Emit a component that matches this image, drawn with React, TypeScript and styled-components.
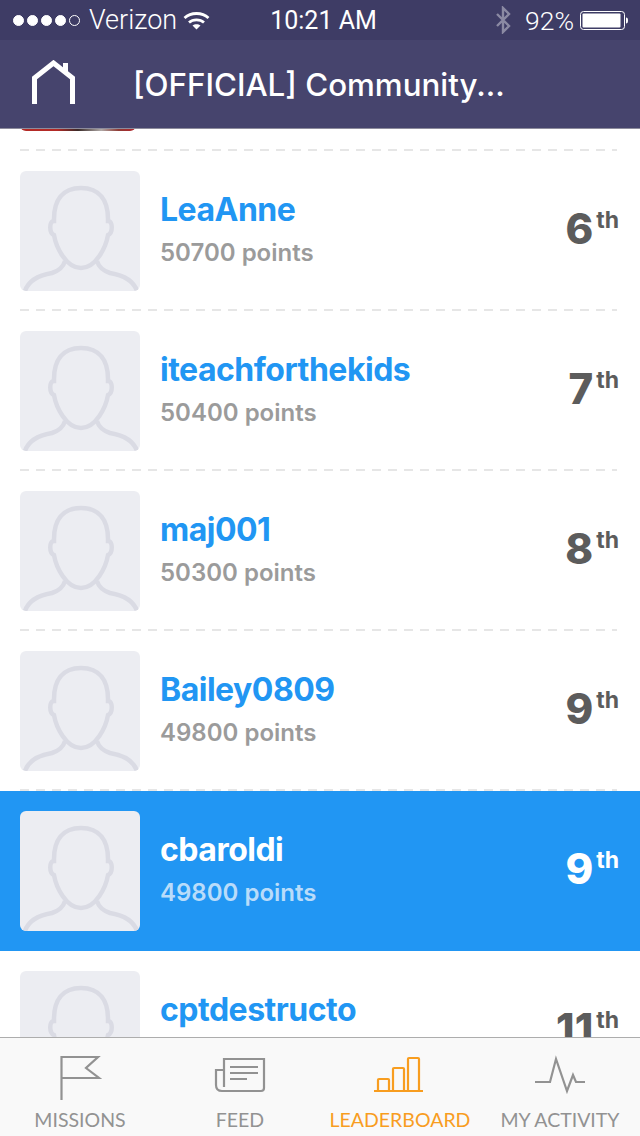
import React from 'react';
import styled, { createGlobalStyle } from 'styled-components';

const GlobalStyle = createGlobalStyle`
  html, body {
    margin: 0;
    padding: 0;
    background: #fff;
  }
`;

const Screen = styled.div`
  width: 640px;
  height: 1136px;
  display: flex;
  flex-direction: column;
  overflow: hidden;
  font-family: 'Inter', 'Liberation Sans', sans-serif;
`;

const StatusBar = styled.div`
  height: 40px;
  flex: none;
  box-sizing: border-box;
  background: #3e3c65;
  color: #fff;
  display: grid;
  grid-template-columns: 1fr auto 1fr;
  align-items: center;
  padding: 0 12px 0 13px;
  font-family: 'Roboto', 'Liberation Sans', sans-serif;
  font-size: 26.5px;
  font-weight: 300;
`;

const StatusLeft = styled.div`
  display: flex;
  align-items: center;
`;

const StatusRight = styled.div`
  display: flex;
  align-items: center;
  justify-content: flex-end;
`;

const Dot = styled.span<{ $empty?: boolean }>`
  width: 11px;
  height: 11px;
  margin-right: 3px;
  border-radius: 50%;
  box-sizing: border-box;
  background: ${(p) => (p.$empty ? 'transparent' : '#fff')};
  border: 1px solid #fff;
`;

const Carrier = styled.span`
  margin-left: 6px;
  margin-right: 6px;
  font-size: 27px;
`;

const Clock = styled.span`
  margin-left: 6px;
  font-size: 25px;
  font-weight: 400;
`;

const Percent = styled.span`
  margin: 0 6px 0 14px;
`;

const NavBar = styled.div`
  height: 89px;
  flex: none;
  box-sizing: border-box;
  background: #46446d;
  display: flex;
  align-items: center;
  padding: 0 0 0 32px;
  border-bottom: 1px solid #8d8c9c;
`;

const HomeIcon = styled.svg`
  margin-bottom: 4px;
  fill: none;
  stroke: #fff;
  stroke-width: 5;
`;

const NavTitle = styled.div`
  margin-left: 58px;
  margin-top: 2px;
  color: #fff;
  font-size: 31.3px;
  font-weight: 500;
  white-space: nowrap;
`;

const List = styled.div`
  flex: 1;
  min-height: 0;
  overflow: hidden;
`;

const Rows = styled.div`
  margin-top: -138px;
`;

const Row = styled.div<{ $active?: boolean }>`
  position: relative;
  height: 160px;
  box-sizing: border-box;
  padding: 20px;
  display: flex;
  align-items: flex-start;
  background: ${(p) => (p.$active ? '#2196f3' : '#fff')};

  ${(p) =>
    !p.$active &&
    `&::after {
      content: '';
      position: absolute;
      left: 20px;
      right: 23px;
      bottom: 0;
      height: 2px;
      background: repeating-linear-gradient(90deg, #e6e6e6 0 9px, transparent 9px 16px);
    }`}
`;

const Avatar = styled.div`
  width: 120px;
  height: 120px;
  flex: none;
  border-radius: 6px;
  overflow: hidden;
  background: #ecedf2;
`;

const Photo = styled.div`
  width: 116px;
  height: 120px;
  flex: none;
  border-radius: 6px;
  background: linear-gradient(90deg, #b32a26 0 32%, #3a2a28 50%, #b0aaa8 70%, #8f3a34 85%, #b5242c 100%);
`;

const Info = styled.div`
  margin-left: 20px;
  margin-top: 19px;
  flex: 1;
  min-width: 0;
`;

const Name = styled.div<{ $active?: boolean }>`
  color: ${(p) => (p.$active ? '#fff' : '#2196f3')};
  font-size: 32px;
  font-weight: 700;
  letter-spacing: -0.5px;
  line-height: 40px;
`;

const Points = styled.div<{ $active?: boolean }>`
  color: ${(p) => (p.$active ? '#b9dcfa' : '#9b9b9b')};
  font-size: 24px;
  font-weight: 600;
  line-height: 30px;
  margin-top: 8px;
`;

const Rank = styled.div<{ $active?: boolean }>`
  margin-top: 33px;
  margin-right: 1px;
  color: ${(p) => (p.$active ? '#fff' : '#5c5c5c')};
  font-size: 42px;
  font-weight: 800;
  line-height: 50px;
  display: flex;
`;

const Suffix = styled.span`
  font-size: 23px;
  line-height: 32px;
  font-weight: 700;
  margin-left: 3px;
`;

const TabBar = styled.div`
  height: 99px;
  flex: none;
  box-sizing: border-box;
  background: #f9f9f9;
  border-top: 1px solid #adadad;
  display: flex;
`;

const Tab = styled.div<{ $active?: boolean }>`
  flex: 1;
  display: flex;
  flex-direction: column;
  align-items: center;
  color: ${(p) => (p.$active ? '#f89d1f' : '#929292')};
  font-family: 'Lato', 'Liberation Sans', sans-serif;
  font-size: 19.5px;
  white-space: nowrap;
  padding-top: 14px;
`;

const TabIcon = styled.svg`
  width: 60px;
  height: 50px;
  fill: none;
  stroke: currentColor;
  stroke-width: 2.2;
`;

const TabLabel = styled.span`
  margin-top: 6px;
  line-height: 24px;
`;

function Silhouette() {
  return (
    <svg width="120" height="120" viewBox="0 0 120 120" fill="none" stroke="#dadbe4" strokeWidth="4.5">
      <path d="M61 17C42 17 34 30 34 48V50C29 50 29 62 34 64C36 76 46 97 61 97C76 97 86 76 88 64C93 62 93 50 88 50V48C88 30 80 17 61 17Z" />
      <path d="M5 120C9 108 20 104 32 102C38 100 43 97 45 90" />
      <path d="M77 90C79 97 84 100 90 102C102 104 113 108 117 120" />
    </svg>
  );
}

const people = [
  { name: 'LeaAnne', points: 50700, rank: 6 },
  { name: 'iteachforthekids', points: 50400, rank: 7 },
  { name: 'maj001', points: 50300, rank: 8 },
  { name: 'Bailey0809', points: 49800, rank: 9 },
  { name: 'cbaroldi', points: 49800, rank: 9, active: true },
  { name: 'cptdestructo', rank: 11 },
];

export default function App() {
  return (
    <Screen>
      <GlobalStyle />
      <StatusBar>
        <StatusLeft>
          <Dot />
          <Dot />
          <Dot />
          <Dot />
          <Dot $empty />
          <Carrier>Verizon</Carrier>
          <svg width="27" height="19" viewBox="0 0 27 19" fill="none" stroke="#fff" strokeWidth="2.8">
            <path d="M1.5 7C8 1 19 1 25.5 7" />
            <path d="M6 11.5C10 8 17 8 21 11.5" />
            <path d="M13.5 18.5l-4-4c2.3-1.8 5.7-1.8 8 0z" fill="#fff" stroke="none" />
          </svg>
        </StatusLeft>
        <Clock>10:21 AM</Clock>
        <StatusRight>
          <svg width="16" height="28" viewBox="0 0 16 28" fill="none" stroke="#8b8aa3" strokeWidth="2.4">
            <path d="M2 8l12 12-6 6V2l6 6L2 20" />
          </svg>
          <Percent>92%</Percent>
          <svg width="48" height="19" viewBox="0 0 48 19">
            <rect x="0.5" y="0.5" width="44" height="18" rx="3" fill="none" stroke="#fff" />
            <rect x="2.5" y="2.5" width="38" height="14" rx="1" fill="#fff" />
            <path d="M46 6.5c1.5 0 2 1 2 3s-.5 3-2 3z" fill="#fff" />
          </svg>
        </StatusRight>
      </StatusBar>
      <NavBar>
        <HomeIcon width="43" height="44" viewBox="0 0 43 44">
          <path d="M2.5 44V18L21.5 3 40.5 18V44" />
          <path d="M33.5 3V13" />
        </HomeIcon>
        <NavTitle>[OFFICIAL] Community...</NavTitle>
      </NavBar>
      <List>
        <Rows>
          <Row>
            <Photo />
          </Row>
          {people.map((p) => (
            <Row key={p.name} $active={p.active}>
              <Avatar>
                <Silhouette />
              </Avatar>
              <Info>
                <Name $active={p.active}>{p.name}</Name>
                {p.points && <Points $active={p.active}>{p.points} points</Points>}
              </Info>
              <Rank $active={p.active}>
                {p.rank}
                <Suffix>th</Suffix>
              </Rank>
            </Row>
          ))}
        </Rows>
      </List>
      <TabBar>
        <Tab>
          <TabIcon viewBox="0 0 60 50">
            <path d="M11.5 48V5H48L36 16l13 10H11.5" />
          </TabIcon>
          <TabLabel>MISSIONS</TabLabel>
        </Tab>
        <Tab>
          <TabIcon viewBox="0 0 60 50">
            <path d="M14 35V7h40v29q0 3-3 3H12q-6 0-6-6V18h8" />
            <path d="M20 15h28M20 21h28M20 27h17" />
          </TabIcon>
          <TabLabel>FEED</TabLabel>
        </Tab>
        <Tab $active>
          <TabIcon viewBox="0 0 60 50">
            <path d="M4 39h49" />
            <path d="M8 39V28q0-1 1-1h9q1 0 1 1v11M23 39V17q0-1 1-1h9q1 0 1 1v22M38 39V7q0-1 1-1h9q1 0 1 1v32" />
          </TabIcon>
          <TabLabel>LEADERBOARD</TabLabel>
        </Tab>
        <Tab>
          <TabIcon viewBox="0 0 60 50">
            <path d="M5 30h15l6-23 11 32 6-16 3 7h9" />
          </TabIcon>
          <TabLabel>MY ACTIVITY</TabLabel>
        </Tab>
      </TabBar>
    </Screen>
  );
}
